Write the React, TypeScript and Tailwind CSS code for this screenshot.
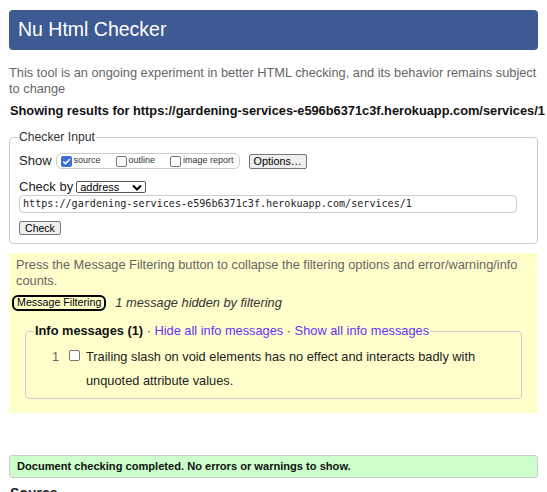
import React from "react";

function Cb({ checked, cls = "" }: { checked?: boolean; cls?: string }) {
  return checked ? (
    <span className={"inline-block shrink-0 w-[11px] h-[11px] rounded-[2px] bg-[#3a6fd8] relative " + cls}>
      <svg viewBox="0 0 11 11" className="absolute inset-0 w-[11px] h-[11px]">
        <path d="M2.3 5.6 L4.4 7.7 L8.8 3.2" fill="none" stroke="#fff" strokeWidth="1.6" />
      </svg>
    </span>
  ) : (
    <span className={"inline-block shrink-0 w-[11px] h-[11px] rounded-[2px] border border-[#767676] bg-white " + cls} />
  );
}

export default function App() {
  return (
    <div className="w-[547px] h-[492px] overflow-hidden bg-white text-[#222] font-['Liberation_Sans',Arial,sans-serif] text-[12.8px]">
      <div className="pt-[10px] px-[9px]">
        <div className="h-[40px] bg-[#3e5a93] rounded-[4px] flex items-center px-[9px]">
          <h1 className="text-white text-[19.5px] leading-none font-normal">Nu Html Checker</h1>
        </div>
        <p className="mt-[15px] text-[#666] leading-[16px]">
          This tool is an ongoing experiment in better HTML checking, and its behavior remains subject to change
        </p>
        <p className="mt-[6px] font-bold leading-[16px] whitespace-nowrap text-[#111] text-[12.8px] ml-[1px]">
          Showing results for https://gardening-services-e596b6371c3f.herokuapp.com/services/1
        </p>
        <fieldset className="mt-[10px] border border-[#ccc] rounded-[4px] px-[9px] pb-[6px] pt-[4px]">
          <legend className="ml-[-1px] px-[1px] text-[#333] text-[12.2px] leading-[16px]">Checker Input</legend>
          <div className="flex items-center h-[20px] mt-[2px]">
            <span className="text-[13px] mr-[4px]">Show</span>
            <span className="flex items-center border border-[#ccc] rounded-[6px] h-[16px] pl-[4px] pr-[5px] text-[9px] text-[#333]">
              <Cb checked cls="mr-[2px]" />
              <span className="mr-[15px]">source</span>
              <Cb cls="mr-[2px]" />
              <span className="mr-[15px]">outline</span>
              <Cb cls="mr-[2px]" />
              <span>image report</span>
            </span>
            <button className="ml-[9px] h-[15px] w-[58px] border border-[#767676] bg-[#efefef] rounded-[2px] text-[10.8px] leading-none text-black">
              Options…
            </button>
          </div>
          <div className="flex items-center h-[20px] mt-[6px]">
            <span className="text-[13px] mr-[3px]">Check by</span>
            <span className="h-[12px] w-[70px] border border-[#555] rounded-[2px] flex items-center justify-between pl-[3px] pr-[3px] text-[11px] leading-none text-black">
              address
              <svg width="10" height="7" viewBox="0 0 10 7">
                <path d="M1 1.5 L5 5.5 L9 1.5" fill="none" stroke="#000" strokeWidth="2" />
              </svg>
            </span>
          </div>
          <div className="mt-[-2px] h-[18px] border border-[#ccc] rounded-[4px] flex items-center px-[3px] font-['DejaVu_Sans_Mono','Liberation_Mono',monospace] text-[10.1px] text-[#222] w-[498px]">
            https://gardening-services-e596b6371c3f.herokuapp.com/services/1
          </div>
          <button className="mt-[8px] h-[14px] w-[42px] border border-[#767676] bg-[#efefef] rounded-[2px] text-[10.5px] leading-none text-black">
            Check
          </button>
        </fieldset>
        <div className="mt-[9px] bg-[#ffffcc] h-[160px] px-[7px] pt-[4px]">
          <p className="text-[#666] leading-[16px]">
            Press the Message Filtering button to collapse the filtering options and error/warning/info counts.
          </p>
          <div className="flex items-center mt-[4px] -ml-[4px]">
            <span className="border-2 border-black rounded-[6px] h-[16px] px-[3px] flex items-center text-[10.7px] leading-none text-black">
              Message Filtering
            </span>
            <span className="ml-[9px] italic text-[#333] text-[12.8px]">1 message hidden by filtering</span>
          </div>
          <fieldset className="mt-[10px] ml-[9px] mr-[9px] border border-[#ccc] rounded-[4px] pl-[26px] pr-[8px] pb-[5px] pt-[5px]">
            <legend className="-ml-[18px] px-[1px] text-[12.8px] leading-[18px]">
              <b className="text-[#111]">Info messages (1)</b>
              <span className="text-[#444]"> · </span>
              <span className="text-[#6633ff]">Hide all info messages</span>
              <span className="text-[#444]"> · </span>
              <span className="text-[#6633ff]">Show all info messages</span>
            </legend>
            <div className="flex text-[12.8px] leading-[24px] text-[#222]">
              <span className="w-[17px] shrink-0 text-[#666]">1</span>
              <span className="pt-[5px] mr-[6px] flex items-start"><Cb /></span>
              <span className="flex-1">Trailing slash on void elements has no effect and interacts badly with unquoted attribute values.</span>
            </div>
          </fieldset>
        </div>
        <div className="mt-[42px] h-[23px] bg-[#ccffcc] border border-[#ccc] rounded-[3px] flex items-center px-[7px] font-bold text-[11.1px] text-[#111]">
          Document checking completed. No errors or warnings to show.
        </div>
        <p className="mt-[7px] font-bold text-[14px] leading-[16px] ml-[1px]">Source</p>
      </div>
    </div>
  );
}
